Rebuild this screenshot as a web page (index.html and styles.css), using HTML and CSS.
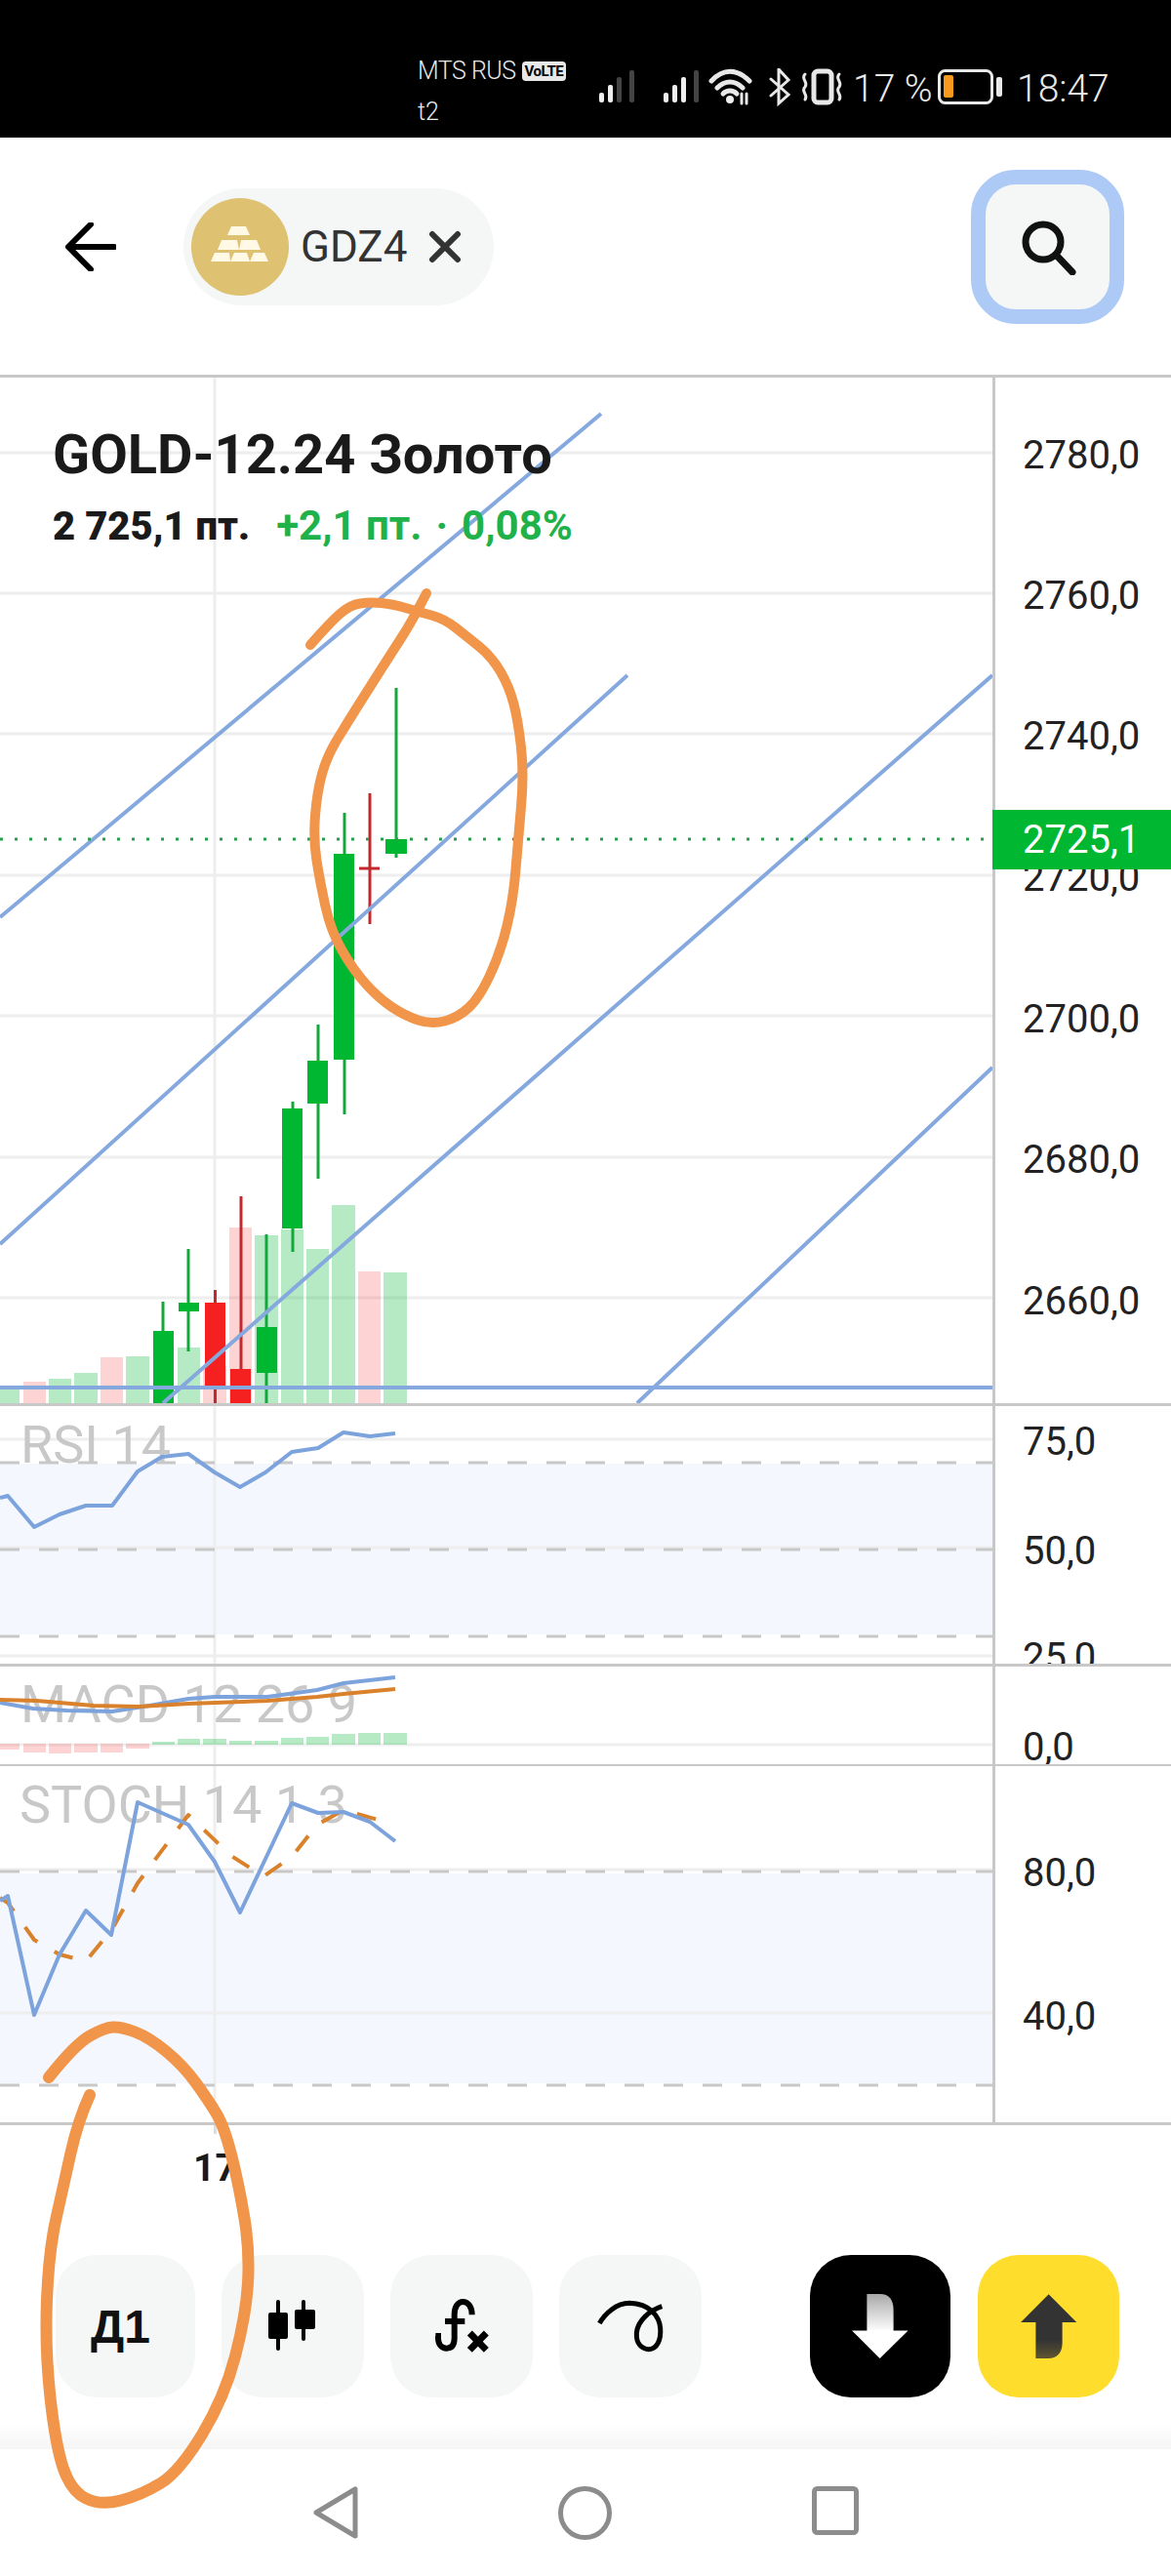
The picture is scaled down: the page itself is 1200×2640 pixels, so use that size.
FILE: index.html
```html
<!DOCTYPE html>
<html lang="en">
<head>
  <meta charset="UTF-8" />
  <meta name="viewport" content="width=device-width, initial-scale=1.0"/>
  <title>GOLD-12.24</title>
  <link rel="stylesheet" href="styles.css">
</head>
<body>
<div class="page">

  <!-- status bar -->
  <div class="status">
    <div class="carrier">
      <div class="carrier-top">MTS RUS <span class="volte">VoLTE</span></div>
      <div class="carrier-sub">t2</div>
    </div>
    <svg class="status-icons" width="251" height="40" viewBox="614 70 251 40">
      <g class="sig-on">
        <rect x="614" y="95" width="5" height="10" rx="2"/>
        <rect x="623" y="87" width="5" height="18" rx="2"/>
        <rect x="680" y="95" width="5" height="10" rx="2"/>
        <rect x="689" y="87" width="5" height="18" rx="2"/>
        <rect x="698" y="79" width="5" height="26" rx="2"/>
      </g>
      <g class="sig-off">
        <rect x="632" y="79" width="5" height="26" rx="2"/>
        <rect x="645" y="72" width="5" height="33" rx="2"/>
        <rect x="711" y="72" width="5" height="33" rx="2"/>
      </g>
      <g class="st-line">
        <path d="M729 83 C741 70 755 70 768 83"/>
        <path d="M735 90 C743 82 753 82 761 90"/>
        <path d="M741 96 C745 92 751 92 755 96"/>
        <path d="M760 96 V106 M765 96 V106" class="st-thin"/>
        <path d="M790 81 L808 97 L798 106 V71 L808 82 L790 98" class="st-bt"/>
        <rect x="834" y="73" width="18" height="32" rx="4"/>
        <path d="M825 76 C820 81 829 84 825 89 C820 94 829 97 825 102 M860 76 C855 81 864 84 860 89 C855 94 864 97 860 102" class="st-thin"/>
      </g>
      <circle class="sig-on" cx="748" cy="102" r="4"/>
    </svg>
    <span class="status-text pct">17 %</span>
    <svg class="battery" width="66" height="36" viewBox="961 71 66 36">
      <rect class="bat-case" x="962.5" y="72.5" width="54" height="33" rx="6"/>
      <rect class="bat-level" x="967" y="77" width="10" height="23" rx="2"/>
      <rect class="bat-nub" x="1021" y="79" width="6" height="20" rx="2"/>
    </svg>
    <span class="status-text time">18:47</span>
  </div>

  <!-- top bar -->
  <header class="topbar">
    <svg class="back" width="52" height="50" viewBox="0 0 52 50">
      <path d="M50 25 H4 M26 2 L3 25 L26 48"/>
    </svg>
    <div class="chip">
      <div class="chip-logo">
        <svg width="60" height="38" viewBox="0 0 60 38">
          <path d="M21 0 H36 L40 9 H17 Z"/>
          <path d="M11 14 H27 L29 24 H7 Z M31 14 H47 L51 24 H29 Z"/>
          <path d="M4 27 H19 L20 36 H0 Z M24 27 H37 L40 36 H20 Z M44 27 H55 L59 36 H40 Z"/>
        </svg>
      </div>
      <span class="chip-name">GDZ4</span>
      <svg class="chip-close" width="34" height="34" viewBox="0 0 34 34">
        <path d="M4 4 L30 30 M30 4 L4 30"/>
      </svg>
    </div>
    <button class="search">
      <svg width="58" height="58" viewBox="0 0 58 58">
        <circle cx="24" cy="24" r="18"/>
        <path d="M37 37 L54 55"/>
      </svg>
    </button>
  </header>

  <!-- chart -->
  <section class="chart">
    <div class="chart-title">
      <h1>GOLD-12.24 Золото</h1>
      <p><b>2 725,1 пт.</b><span class="up">+2,1 пт.</span><span class="up dot">·</span><span class="up">0,08%</span></p>
    </div>
    <div class="price-tag">2725,1</div>

    <div class="pane pane-main">
      <svg class="plot" width="1017" height="1051" viewBox="0 387 1017 1051">
        <path class="grid" d="M0 464H1017M0 608H1017M0 752H1017M0 897H1017M0 1041H1017M0 1186H1017M0 1330H1017M220 387V1438"/>
        <!-- volume -->
        <g class="vol-up">
          <rect x="-4" y="1423" width="24" height="15"/>
          <rect x="50" y="1413" width="23" height="25"/>
          <rect x="76" y="1407" width="24" height="31"/>
          <rect x="129" y="1390" width="24" height="48"/>
          <rect x="182" y="1381" width="23" height="57"/>
          <rect x="261" y="1266" width="24" height="172"/>
          <rect x="288" y="1260" width="23" height="178"/>
          <rect x="314" y="1280" width="23" height="158"/>
          <rect x="340" y="1235" width="24" height="203"/>
          <rect x="393" y="1304" width="24" height="134"/>
        </g>
        <g class="vol-down">
          <rect x="24" y="1416" width="23" height="22"/>
          <rect x="103" y="1391" width="23" height="47"/>
          <rect x="208" y="1400" width="24" height="38"/>
          <rect x="235" y="1258" width="23" height="180"/>
          <rect x="367" y="1303" width="23" height="135"/>
        </g>
        <!-- candles -->
        <path class="wick-up" d="M167 1334V1438M193 1280V1385M273 1265V1438M300 1129V1283M326 1050V1208M353 833V1142M406 705V879"/>
        <path class="wick-down" d="M220.500 1322V1438M247 1226V1403M379 813V947M368 890H389"/>
        <g class="candle-up">
          <rect x="157" y="1364" width="21" height="74"/>
          <rect x="183" y="1335" width="21" height="9"/>
          <rect x="263" y="1360" width="21" height="47"/>
          <rect x="289" y="1136" width="21" height="123"/>
          <rect x="315" y="1087" width="21" height="44"/>
          <rect x="342" y="875" width="21" height="211"/>
          <rect x="395" y="860" width="22" height="15"/>
        </g>
        <g class="candle-down">
          <rect x="210" y="1335" width="21" height="85"/>
          <rect x="236" y="1403" width="21" height="35"/>
        </g>
        <!-- trend lines -->
        <path class="trend" d="M0 940L616 424M0 1275L643 692M167 1438L1017 692M653 1438L1017 1094M0 1422H1017"/>
        <path class="last-price" d="M0 860H1017"/>
      </svg>
      <svg class="axis" width="180" height="1051" viewBox="1020 387 180 1051">
        <text x="1048" y="480">2780,0</text>
        <text x="1048" y="624">2760,0</text>
        <text x="1048" y="768">2740,0</text>
        <text x="1048" y="913">2720,0</text>
        <text x="1048" y="1058">2700,0</text>
        <text x="1048" y="1202">2680,0</text>
        <text x="1048" y="1347">2660,0</text>
      </svg>
    </div>

    <div class="pane pane-rsi">
      <svg class="plot" width="1017" height="264" viewBox="0 1441 1017 264">
        <rect class="band" x="0" y="1500" width="1017" height="175"/>
        <path class="grid" d="M0 1475H1017M0 1586H1017M0 1697H1017M220 1441V1705"/>
        <path class="band-edge" d="M0 1499H1017M0 1588H1017M0 1677H1017"/>
        <text class="ind-name" x="21" y="1499">RSI 14</text>
        <path class="ind-blue" d="M0 1535L8 1533L35 1565L61 1552L88 1543L115 1543L141 1508L166 1493L193 1490L220 1509L246 1524L272 1509L299 1488L326 1484L352 1468L379 1472L405 1469"/>
      </svg>
      <svg class="axis" width="180" height="264" viewBox="1020 1441 180 264">
        <text x="1048" y="1491">75,0</text>
        <text x="1048" y="1603">50,0</text>
        <text x="1048" y="1712">25,0</text>
      </svg>
    </div>

    <div class="pane pane-macd">
      <svg class="plot" width="1017" height="100" viewBox="0 1708 1017 100">
        <path class="grid" d="M0 1788H1017M220 1708V1808"/>
        <g class="vol-down">
          <rect x="-4" y="1787" width="24" height="6"/>
          <rect x="24" y="1787" width="23" height="9"/>
          <rect x="50" y="1787" width="23" height="10"/>
          <rect x="76" y="1787" width="24" height="9"/>
          <rect x="103" y="1787" width="23" height="9"/>
          <rect x="129" y="1787" width="24" height="5"/>
        </g>
        <g class="vol-up">
          <rect x="156" y="1785" width="23" height="3"/>
          <rect x="182" y="1782" width="23" height="6"/>
          <rect x="208" y="1782" width="24" height="6"/>
          <rect x="235" y="1784" width="23" height="4"/>
          <rect x="261" y="1784" width="24" height="4"/>
          <rect x="288" y="1781" width="23" height="7"/>
          <rect x="314" y="1780" width="23" height="8"/>
          <rect x="340" y="1777" width="24" height="11"/>
          <rect x="367" y="1776" width="23" height="12"/>
          <rect x="393" y="1776" width="24" height="12"/>
        </g>
        <text class="ind-name" x="21" y="1765">MACD 12 26 9</text>
        <path class="ind-blue" d="M0 1745L34 1751L69 1753L115 1754L153 1748L193 1741L220 1739L274 1739L325 1732L352 1725L405 1719"/>
        <path class="ind-orange" d="M0 1742L38 1743L96 1748L142 1749L193 1746L274 1743L325 1739L352 1736L405 1731"/>
      </svg>
      <svg class="axis" width="180" height="100" viewBox="1020 1708 180 100">
        <text x="1048" y="1804">0,0</text>
      </svg>
    </div>

    <div class="pane pane-stoch">
      <svg class="plot" width="1017" height="365" viewBox="0 1810 1017 365">
        <rect class="band" x="0" y="1920" width="1017" height="215"/>
        <path class="grid" d="M0 1916H1017M0 2063H1017M220 1810V2175"/>
        <path class="band-edge" d="M0 1918H1017M0 2137H1017"/>
        <text class="ind-name" x="20" y="1868">STOCH 14 1 3</text>
        <path class="stoch-slow" d="M0 1945L8 1950L35 1988L61 2003L88 2010L115 1977L141 1930L193 1860L237 1902L270 1923L299 1903L325 1870L352 1855L398 1868"/>
        <path class="ind-blue" d="M0 1948L8 1943L35 2065L61 2003L88 1958L114 1983L141 1847L193 1870L220 1908L246 1960L299 1848L326 1858L352 1857L379 1867L405 1887"/>
      </svg>
      <svg class="axis" width="180" height="365" viewBox="1020 1810 180 365">
        <text x="1048" y="1933">80,0</text>
        <text x="1048" y="2080">40,0</text>
      </svg>
    </div>
  </section>

  <!-- time axis -->
  <div class="time-row">
    <span class="tick"></span>
    <span class="time-label">17</span>
  </div>

  <!-- toolbar -->
  <div class="toolbar">
    <button class="tool tool-period">Д1</button>
    <button class="tool">
      <svg width="50" height="54" viewBox="0 0 50 54">
        <path class="ico-fill" d="M8 2 a2 2 0 0 1 4 0 V13 h6 a2 2 0 0 1 2 2 V38 a2 2 0 0 1 -2 2 h-6 V50 a2 2 0 0 1 -4 0 V40 H2 a2 2 0 0 1 -2 -2 V15 a2 2 0 0 1 2 -2 h6 Z"/>
        <path class="ico-fill" d="M34 2 a2 2 0 0 1 4 0 V10 h8 a2 2 0 0 1 2 2 V28 a2 2 0 0 1 -2 2 h-8 V40 a2 2 0 0 1 -4 0 V30 H29 a2 2 0 0 1 -2 -2 V12 a2 2 0 0 1 2 -2 h5 Z"/>
      </svg>
    </button>
    <button class="tool">
      <svg width="64" height="60" viewBox="540 45 192 180">
        <path class="ico-line" d="M556 165 H564 V172 C564 192 576 203 590 203 C606 203 614 192 614 172 V100 C614 75 625 60 640 60 C656 60 668 75 668 100"/>
        <path class="ico-line" d="M585 120 H646"/>
        <path class="ico-x" d="M661 156 L712 208 M712 156 L661 208"/>
      </svg>
    </button>
    <button class="tool">
      <svg width="72" height="56" viewBox="1045 45 216 168">
        <path class="ico-line ico-curve" d="M1250 68 C1215 80 1175 110 1172 150 C1170 185 1190 200 1210 200 C1235 200 1248 170 1245 135 C1242 100 1215 60 1150 58 C1110 58 1075 90 1058 120"/>
      </svg>
    </button>
    <button class="trade trade-sell">
      <svg width="58" height="66" viewBox="38 37 170 194">
        <defs>
          <linearGradient id="sellStem" x1="0" y1="0" x2="0" y2="1">
            <stop offset="0" stop-color="#a8a8a8"/>
            <stop offset="1" stop-color="#ffffff"/>
          </linearGradient>
          <linearGradient id="buyStem" x1="0" y1="0" x2="0" y2="1">
            <stop offset="0" stop-color="#333333"/>
            <stop offset="0.5" stop-color="#333333"/>
            <stop offset="1" stop-color="#5f5630"/>
          </linearGradient>
        </defs>
        <path fill="url(#sellStem)" d="M83 37 H123 C150 37 163 55 163 85 V150 H83 Z"/>
        <path fill="#fff" d="M38 147 H207 L122 231 Z"/>
      </svg>
    </button>
    <button class="trade trade-buy">
      <svg width="58" height="66" viewBox="557 37 170 194">
        <path fill="#333" d="M641 38 L725 122 H557 Z"/>
        <path fill="url(#buyStem)" d="M602 120 H682 V185 C682 215 665 231 640 231 H602 Z"/>
      </svg>
    </button>
  </div>

  <div class="bottom-shadow"></div>

  <!-- android nav -->
  <nav class="navbar">
    <svg width="46" height="54" viewBox="0 0 46 54">
      <path d="M43 3 V51 L3 27 Z"/>
    </svg>
    <svg width="55" height="55" viewBox="0 0 55 55">
      <circle cx="27.500" cy="27.500" r="25"/>
    </svg>
    <svg width="48" height="50" viewBox="0 0 48 50">
      <rect x="2.500" y="2.500" width="43" height="45" rx="3"/>
    </svg>
  </nav>

  <!-- hand drawn marks over the screenshot -->
  <svg class="scribble" width="1200" height="2640" viewBox="0 0 1200 2640">
    <path class="mark-top" d="M318 661Q339 637 349 628.500Q359 620 369 618.500Q379 617 390.500 618Q402 619 415.500 623Q429 627 442 630.500Q455 634 466.500 643Q478 652 491 662.500Q504 673 513 688.500Q522 704 526.500 721.500Q531 739 534 766Q537 793 534 826.500Q531 860 528.500 891Q526 922 519.500 949Q513 976 502 999.500Q491 1023 480 1033Q469 1043 455.500 1046.500Q442 1050 428.500 1045.500Q415 1041 401.500 1032Q388 1023 375 1008.500Q362 994 350.500 974Q339 954 333.500 929Q328 904 324.500 882Q321 860 323 835.500Q325 811 330 793Q335 775 346 757Q357 739 368 721.500Q379 704 390.500 686Q402 668 412 652.500Q422 637 437 608"/>
    <path class="mark-bottom" d="M50 2129Q77 2095 92 2086.500Q107 2078 115.500 2077.500Q124 2077 138.500 2082.500Q153 2088 170.500 2102.500Q188 2117 201 2135Q214 2153 222 2166.500Q230 2180 237.500 2210Q245 2240 250.500 2273.500Q256 2307 254 2340Q252 2373 241 2415Q230 2457 207 2495Q184 2533 164.500 2545Q145 2557 124 2562.500Q103 2568 88 2560.500Q73 2553 65 2530Q57 2507 51.500 2457Q46 2407 48 2357Q50 2307 57.500 2273.500Q65 2240 72.500 2206.500Q80 2173 92 2147"/>
  </svg>
</div>
</body>
</html>
```

FILE: styles.css
```css
* {
  box-sizing: border-box;
}

body {
  margin: 0;
  background: #fff;
  font-family: Roboto, "Noto Sans", sans-serif;
  color: #1a1a1a;
}

.page {
  position: relative;
  width: 1200px;
  height: 2640px;
  overflow: hidden;
}

/* status bar */
.status {
  height: 141px;
  background: #000;
  color: #e8e8e8;
  display: flex;
  padding-left: 428px;
}

.carrier {
  width: 186px;
  padding-top: 58px;
  font-size: 25px;
  font-weight: 300;
  line-height: 30px;
}

.carrier-top {
  display: flex;
  align-items: center;
  gap: 6px;
  white-space: nowrap;
  letter-spacing: -0.5px;
}

.carrier-sub {
  margin-top: 12px;
}

.volte {
  background: #e8e8e8;
  color: #000;
  font-size: 15px;
  font-weight: 700;
  line-height: 20px;
  padding: 0 3px;
  border-radius: 4px;
  letter-spacing: -0.5px;
}

.status-icons {
  margin-top: 70px;
}

.sig-on {
  fill: #eee;
}

.sig-off {
  fill: #444;
}

.st-line path,
.st-line rect {
  fill: none;
  stroke: #e8e8e8;
  stroke-width: 5;
  stroke-linecap: round;
}

.st-line .st-thin,
.st-line .st-bt {
  stroke-width: 3;
}

.status-text {
  font-size: 39px;
  font-weight: 300;
  line-height: 44px;
  margin-top: 69px;
  white-space: nowrap;
}

.pct {
  width: 96px;
  padding-left: 9px;
}

.battery {
  margin-top: 71px;
}

.bat-case {
  fill: none;
  stroke: #e8e8e8;
  stroke-width: 3;
}

.bat-level {
  fill: #f79a1e;
}

.bat-nub {
  fill: #e8e8e8;
}

.time {
  margin-left: 15px;
}

/* top bar */
.topbar {
  height: 243px;
  padding: 0 48px 20px 67px;
  display: flex;
  align-items: center;
}

.back path {
  fill: none;
  stroke: #000;
  stroke-width: 6;
  stroke-linecap: round;
  stroke-linejoin: round;
}

.chip {
  width: 318px;
  height: 120px;
  margin-left: 69px;
  padding-left: 8px;
  border-radius: 60px;
  background: #f5f7f7;
  display: flex;
  align-items: center;
}

.chip-logo {
  width: 100px;
  height: 100px;
  border-radius: 50%;
  background: #dfc172;
  display: flex;
  align-items: center;
  justify-content: center;
  padding-bottom: 4px;
}

.chip-logo path {
  fill: #fff9e6;
}

.chip-name {
  margin-left: 12px;
  font-size: 44px;
  color: #333;
}

.chip-close {
  margin-left: 22px;
}

.chip-close path {
  fill: none;
  stroke: #333;
  stroke-width: 6;
  stroke-linecap: round;
}

.search {
  width: 157px;
  height: 158px;
  margin-left: auto;
  padding: 0;
  border: 15px solid #adc9f5;
  border-radius: 46px;
  background: #f5f7f7;
  display: flex;
  align-items: center;
  justify-content: center;
}

.search circle,
.search path {
  fill: none;
  stroke: #111;
  stroke-width: 7;
  stroke-linecap: round;
}

/* chart */
.chart {
  position: relative;
  border-top: 3px solid #c8c8c8;
}

.chart-title {
  position: absolute;
  top: 47px;
  left: 54px;
}

.chart-title h1 {
  margin: 0;
  font-size: 56px;
  font-weight: 700;
  line-height: 64px;
  white-space: nowrap;
}

.chart-title p {
  margin: 18px 0 0;
  font-size: 40px;
  font-weight: 700;
  line-height: 46px;
  white-space: nowrap;
}

.chart-title b {
  margin-right: 27px;
}

.chart-title .up {
  font-size: 42px;
  color: #1fb24a;
}

.chart-title .dot {
  margin: 0 14px;
}

.price-tag {
  position: absolute;
  top: 443px;
  left: 1017px;
  width: 183px;
  height: 61px;
  padding-left: 31px;
  background: #00b732;
  color: #fff;
  font-size: 40px;
  line-height: 61px;
}

.pane {
  display: flex;
  border-bottom: 3px solid #c8c8c8;
}

.pane-macd {
  border-bottom-width: 2px;
}

.plot {
  display: block;
  flex: none;
}

.axis {
  display: block;
  flex: none;
  box-sizing: content-box;
  border-left: 3px solid #c8c8c8;
}

.axis text {
  font-size: 40px;
  fill: #222;
}

.grid {
  fill: none;
  stroke: #eeeeee;
  stroke-width: 3;
}

.vol-up {
  fill: #00b732;
  fill-opacity: 0.29;
}

.vol-down {
  fill: #f52222;
  fill-opacity: 0.2;
}

.candle-up {
  fill: #00b732;
}

.candle-down {
  fill: #f52020;
}

.wick-up {
  fill: none;
  stroke: #14a83c;
  stroke-width: 3;
}

.wick-down {
  fill: none;
  stroke: #c4282f;
  stroke-width: 3;
}

.trend {
  fill: none;
  stroke: #85a9de;
  stroke-width: 4;
}

.last-price {
  fill: none;
  stroke: #2a9d4f;
  stroke-width: 3;
  stroke-dasharray: 3 12;
}

.band {
  fill: #f4f7fd;
}

.band-edge {
  fill: none;
  stroke: #c8c8c8;
  stroke-width: 3;
  stroke-dasharray: 20 20;
}

.ind-name {
  font-size: 54px;
  font-weight: 400;
  fill: #c8c8c8;
}

.ind-blue,
.ind-orange,
.stoch-slow {
  fill: none;
  stroke: #7da3dc;
  stroke-width: 4;
  stroke-linejoin: round;
}

.ind-orange {
  stroke: #d9822b;
}

.stoch-slow {
  stroke: #d9822b;
  stroke-dasharray: 20 20;
}

/* time axis */
.time-row {
  position: relative;
  height: 133px;
  padding: 21px 0 0 198px;
}

.tick {
  position: absolute;
  top: 0;
  left: 219px;
  width: 3px;
  height: 9px;
  background: #ddd;
}

.time-label {
  font-size: 39px;
  font-weight: 700;
  line-height: 46px;
}

/* toolbar */
.toolbar {
  height: 146px;
  padding-left: 57px;
  display: flex;
}

.tool,
.trade {
  height: 146px;
  padding: 0;
  border: none;
  border-radius: 42px;
  display: flex;
  align-items: center;
  justify-content: center;
}

.tool {
  width: 146px;
  margin-right: 27px;
  background: #f5f7f7;
}

.tool-period {
  width: 143px;
  padding-right: 10px;
  font-family: "Liberation Sans", sans-serif;
  font-size: 48px;
  font-weight: 700;
  color: #111;
}

.ico-fill {
  fill: #000;
}

.ico-line {
  fill: none;
  stroke: #000;
  stroke-width: 18;
}

.ico-x {
  fill: none;
  stroke: #000;
  stroke-width: 21;
}

.ico-curve {
  stroke-width: 15;
}

.trade {
  width: 144px;
}

.trade-sell {
  margin-left: 84px;
  background: #000;
}

.trade-buy {
  width: 145px;
  margin-left: 28px;
  background: #ffdd2d;
}

.bottom-shadow {
  height: 27px;
  margin-top: 26px;
  background: linear-gradient(#fff, #f5f5f5);
}

/* android nav */
.navbar {
  height: 130px;
  padding: 38px 0 0 321px;
  display: flex;
  align-items: flex-start;
  gap: 205px;
}

.navbar path,
.navbar circle,
.navbar rect {
  fill: none;
  stroke: #8c8c8c;
  stroke-width: 5;
  stroke-linejoin: round;
}

/* hand drawn marks */
.scribble {
  position: absolute;
  top: 0;
  left: 0;
  pointer-events: none;
}

.scribble path {
  fill: none;
  stroke: #f0954a;
  stroke-linecap: round;
  stroke-linejoin: round;
}

.mark-top {
  stroke-width: 10;
}

.mark-bottom {
  stroke-width: 12;
}
```
